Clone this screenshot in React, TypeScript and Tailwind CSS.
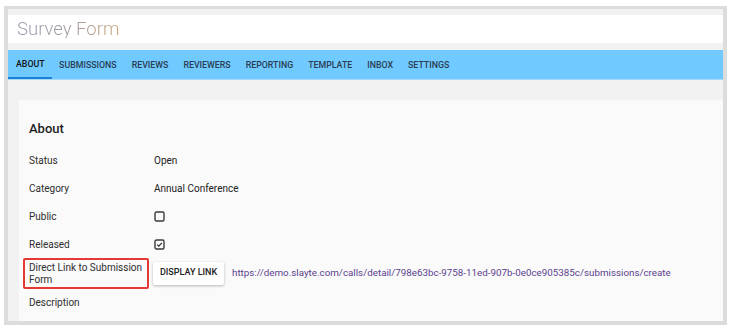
import { ReactNode } from 'react';

const TABS = ['About', 'Submissions', 'Reviews', 'Reviewers', 'Reporting', 'Template', 'Inbox', 'Settings'];

const LINK =
  'https://demo.slayte.com/calls/detail/798e63bc-9758-11ed-907b-0e0ce905385c/submissions/create';

function Checkbox({ checked = false }: { checked?: boolean }) {
  return (
    <svg width="11" height="11" viewBox="0 0 11 11" className="block">
      <rect x="1" y="1" width="9" height="9" rx="1.5" fill="none" stroke="#3a3a3a" strokeWidth="1.4" />
      {checked && (
        <path d="M3.2 5.6 L4.8 7.1 L7.9 3.9" fill="none" stroke="#2a2a2a" strokeWidth="1.2" />
      )}
    </svg>
  );
}

function Row({ label, children }: { label: ReactNode; children?: ReactNode }) {
  return (
    <div className="flex h-[28px] items-center">
      <div className="w-[125px] shrink-0 text-[#2e2e2e]">{label}</div>
      <div className="flex items-center text-[#222]">{children}</div>
    </div>
  );
}

export default function App() {
  return (
    <div className="h-[330px] w-[733px] bg-white pl-[4px] pt-[6px] font-['Roboto','Liberation_Sans',sans-serif]">
      <div className="flex h-[319px] w-[723px] flex-col overflow-hidden border-x-[4px] border-t-[3px] border-b-[4px] border-[#dcdcdc] bg-[#f2f2f2] pt-[6px]">
        {/* header */}
        <div className="flex h-[28px] items-center bg-white pl-[9px]">
          <span className="bg-gradient-to-r from-[#9a98b0] via-[#a19aa0] to-[#c8a478] bg-clip-text text-[18.5px] font-light leading-none text-transparent">
            Survey Form
          </span>
        </div>

        {/* tabs */}
        <nav className="mt-[7px] flex h-[30px] shrink-0 items-stretch border-b border-[#a6dcfa] bg-[#70caff]">
          {TABS.map((t, i) => (
            <div
              key={t}
              className={
                i === 0
                  ? 'flex items-center border-b-2 border-[#1e7fd6] pl-[8px] pr-[7px] pt-[2px] text-[8.8px] font-medium uppercase text-[#111]'
                  : 'flex items-center px-[7.5px] pt-[2px] text-[8.8px] font-medium uppercase text-[#2b3d52]'
              }
            >
              {t}
            </div>
          ))}
        </nav>

        {/* card */}
        <div className="ml-[11px] mt-[20px] flex-1 bg-[#fafafa] pl-[10px] pt-[20px] text-[10px]">
          <h2 className="mb-[8px] flex h-[18px] items-center text-[13px] font-medium text-[#1d1d1d]">About</h2>
          <Row label="Status">Open</Row>
          <Row label="Category">Annual Conference</Row>
          <Row label="Public">
            <Checkbox />
          </Row>
          <Row label="Released">
            <Checkbox checked />
          </Row>
          <div className="flex h-[30px] items-center">
            <div className="-ml-[6px] mr-[4px] flex h-[31px] w-[126px] shrink-0 items-center rounded-[2px] border-2 border-[#e53935] px-[4px] pt-[1px] leading-[12px] text-[#2e2e2e]">
              Direct Link to Submission
              <br />
              Form
            </div>
            <button className="flex h-[23px] w-[71px] items-center justify-center rounded-[2px] bg-white text-[9px] font-medium uppercase text-[#222] shadow-[0_1px_3px_rgba(0,0,0,0.28)]">
              Display Link
            </button>
            <a className="ml-[8px] text-[9.8px] text-[#5a3f8e]">{LINK}</a>
          </div>
          <Row label="Description" />
        </div>
      </div>
    </div>
  );
}
